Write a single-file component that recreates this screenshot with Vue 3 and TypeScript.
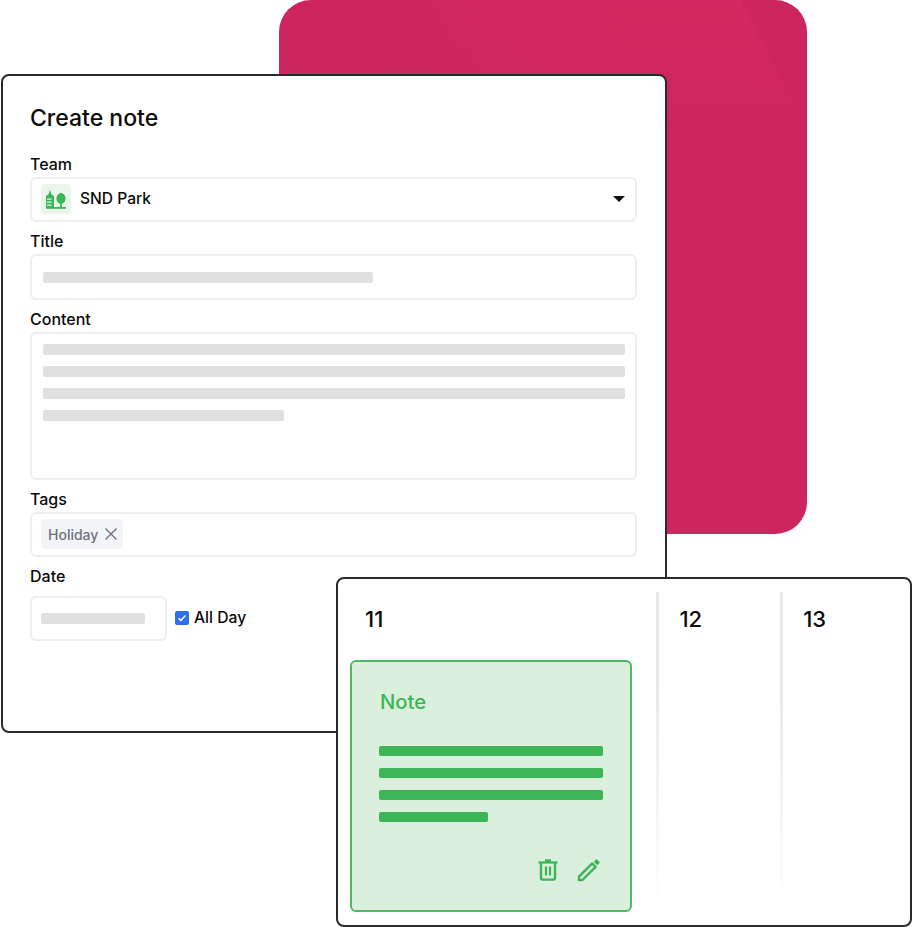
<script setup lang="ts">
const contentLines = [582, 582, 582, 241];
const noteLines = [224, 224, 224, 109];
const days = [
  { num: 11, width: 319 },
  { num: 12, width: 124 },
  { num: 13, width: 130 },
];
</script>

<template>
  <div class="canvas">
    <div class="backdrop">
      <div class="sheen"></div>
    </div>

    <section class="form-card">
      <h1 class="heading">Create note</h1>

      <div class="field">
        <label>Team</label>
        <div class="box team">
          <span class="team-logo">
            <svg width="24" height="24" viewBox="0 0 24 24">
              <path d="M2 20h20v1.8H2z" fill="#3cb556" />
              <path d="M2 9l2.4-1.6L6 3l1.6 4.4L10 9v11.5H2z" fill="#3cb556" />
              <path d="M3 11.5h4.5v1.3H3zM3 14.5h4.5v1.3H3zM3 17.5h4.5v1.3H3z" fill="#eaf6ec" />
              <ellipse cx="17" cy="11.5" rx="4.6" ry="5.4" fill="#3cb556" />
              <path d="M16.1 15h1.8v6h-1.8z" fill="#3cb556" />
            </svg>
          </span>
          <span class="team-name">SND Park</span>
          <span class="caret"></span>
        </div>
      </div>

      <div class="field">
        <label>Title</label>
        <div class="box title-box">
          <div class="skeleton title-line"></div>
        </div>
      </div>

      <div class="field">
        <label>Content</label>
        <div class="box content-box">
          <div
            v-for="(w, i) in contentLines"
            :key="i"
            class="skeleton"
            :style="{ width: w + 'px' }"
          ></div>
        </div>
      </div>

      <div class="field">
        <label>Tags</label>
        <div class="box tags-box">
          <span class="tag">
            Holiday
            <svg width="14" height="14" viewBox="0 0 14 14">
              <path d="M1.5 1.5l11 11M12.5 1.5l-11 11" stroke="#6b7280" stroke-width="1.4" fill="none" />
            </svg>
          </span>
        </div>
      </div>

      <div class="field date-field">
        <label>Date</label>
        <div class="date-row">
          <div class="box date-box">
            <div class="skeleton"></div>
          </div>
          <span class="check">
            <svg width="10" height="10" viewBox="0 0 10 10">
              <path d="M1.5 5.2l2.4 2.3 4.6-5" stroke="#fff" stroke-width="1.5" fill="none" />
            </svg>
          </span>
          <span class="all-day">All Day</span>
        </div>
      </div>
    </section>

    <section class="calendar-card">
      <div
        v-for="d in days"
        :key="d.num"
        class="day"
        :style="{ width: d.width + 'px' }"
      >
        <div class="day-num">{{ d.num }}</div>
        <div v-if="d.num === 11" class="note">
          <div class="note-title">Note</div>
          <div class="note-lines">
            <div
              v-for="(w, i) in noteLines"
              :key="i"
              class="note-line"
              :style="{ width: w + 'px' }"
            ></div>
          </div>
          <div class="note-actions">
            <svg width="24" height="24" viewBox="0 0 24 24" fill="none" stroke="#3cb556">
              <path d="M2.5 4.5h19" stroke-width="2.2" />
              <path d="M9 2.6h6" stroke-width="2.6" />
              <path d="M5 5v15a1.6 1.6 0 0 0 1.6 1.6h10.8A1.6 1.6 0 0 0 19 20V5" stroke-width="2.4" />
              <path d="M10 8.5v9M14 8.5v9" stroke-width="2.2" />
            </svg>
            <svg width="24" height="24" viewBox="0 0 24 24" fill="none" stroke="#3cb556">
              <path d="M2 22v-3.4L15.2 5.4l3.4 3.4L5.4 22z" stroke-width="2.4" stroke-linejoin="round" />
              <path d="M18.2 2.4l3.4 3.4" stroke-width="3.8" />
            </svg>
          </div>
        </div>
      </div>
    </section>
  </div>
</template>

<style>
html,
body {
  margin: 0;
  background: #fff;
}
</style>

<style scoped>
.canvas {
  position: relative;
  width: 912px;
  height: 927px;
  overflow: hidden;
  font-family: Inter, "Liberation Sans", sans-serif;
  color: #0b0b0b;
}

.backdrop {
  position: absolute;
  left: 279px;
  top: 0;
  width: 528px;
  height: 534px;
  border-radius: 32px;
  background: #cd265e;
  overflow: hidden;
}

.sheen {
  position: absolute;
  right: 0;
  top: 0;
  width: 420px;
  height: 130px;
  background: linear-gradient(180deg, rgba(213, 41, 97, 0.75), rgba(213, 41, 97, 0));
  clip-path: polygon(0 0, 84% 0, 100% 100%, 0 100%);
  -webkit-mask-image: linear-gradient(90deg, transparent, #000 55%);
  mask-image: linear-gradient(90deg, transparent, #000 55%);
}

.form-card {
  position: absolute;
  left: 1px;
  top: 74px;
  width: 666px;
  height: 659px;
  box-sizing: border-box;
  padding: 26px 28px 0 27px;
  background: #fff;
  border: 2px solid #2a2a2a;
  border-radius: 8px;
  display: flex;
  flex-direction: column;
}

.heading {
  margin: 0 0 19px;
  font-size: 23px;
  line-height: 32px;
  font-weight: 500;
}

.field {
  display: flex;
  flex-direction: column;
  margin-bottom: 8px;
}

.field label {
  margin-top: -1px;
  margin-bottom: 1px;
  font-size: 16px;
  line-height: 24px;
  font-weight: 500;
}

.box {
  box-sizing: border-box;
  background: #fff;
  border: 2px solid #eeeeee;
  border-radius: 6px;
}

.skeleton {
  height: 11px;
  border-radius: 2px;
  background: #e0e0e0;
}

.team {
  height: 45px;
  display: flex;
  align-items: center;
  padding: 0 10px 1px 9px;
}

.team-logo {
  width: 30px;
  height: 30px;
  border-radius: 4px;
  background: #eaf6ec;
  display: flex;
  align-items: center;
  justify-content: center;
}

.team-name {
  margin-left: 9px;
  margin-top: -1px;
  font-size: 15.6px;
  font-weight: 500;
}

.caret {
  margin-left: auto;
  width: 0;
  height: 0;
  border-left: 6px solid transparent;
  border-right: 6px solid transparent;
  border-top: 6px solid #111;
}

.title-box {
  height: 46px;
  display: flex;
  align-items: center;
  padding: 0 11px;
}

.title-line {
  width: 330px;
}

.content-box {
  height: 148px;
  padding: 10px 11px;
  display: flex;
  flex-direction: column;
  gap: 11px;
}

.tags-box {
  height: 45px;
  display: flex;
  align-items: center;
  padding: 0 9px 1px;
}

.tag {
  height: 30px;
  box-sizing: border-box;
  padding: 0 5px 0 7px;
  display: flex;
  align-items: center;
  gap: 6px;
  border-radius: 4px;
  background: #f3f4f8;
  color: #6b7280;
  font-size: 14px;
  font-weight: 500;
}

.date-field label {
  margin-bottom: 8px;
}

.date-row {
  display: flex;
  align-items: center;
}

.date-box {
  width: 137px;
  height: 45px;
  display: flex;
  align-items: center;
  padding: 0 9px;
}

.date-box .skeleton {
  width: 104px;
}

.check {
  margin-left: 8px;
  margin-top: -2px;
  width: 14px;
  height: 14px;
  border-radius: 2px;
  background: #2f6fed;
  display: flex;
  align-items: center;
  justify-content: center;
}

.all-day {
  margin-left: 5px;
  margin-top: -3px;
  font-size: 15.7px;
  font-weight: 500;
}

.calendar-card {
  position: absolute;
  left: 336px;
  top: 577px;
  width: 576px;
  height: 350px;
  box-sizing: border-box;
  background: #fff;
  border: 2px solid #2a2a2a;
  border-radius: 8px;
  padding: 13px 0 18px 0;
  display: flex;
}

.day {
  position: relative;
  box-sizing: border-box;
  padding-left: 23px;
}

.day + .day::before {
  content: "";
  position: absolute;
  left: 0;
  top: 0;
  bottom: 0;
  width: 3px;
  background: linear-gradient(180deg, #e8e8e8 0%, #e8e8e8 30%, #ffffff 100%);
}

.day:first-child {
  padding-left: 12px;
}

.day-num {
  padding-top: 14px;
  font-size: 22px;
  line-height: 26px;
  font-weight: 500;
}

.day:first-child .day-num {
  padding-left: 15px;
}

.note {
  margin-top: 28px;
  width: 282px;
  height: 252px;
  box-sizing: border-box;
  background: #daf0dd;
  border: 2px solid #4dbb63;
  border-radius: 6px;
  padding: 26px 28px 28px 27px;
  display: flex;
  flex-direction: column;
}

.note-title {
  padding-left: 1px;
  font-size: 20.3px;
  line-height: 28px;
  font-weight: 500;
  color: #3cb556;
}

.note-lines {
  margin-top: 30px;
  display: flex;
  flex-direction: column;
  gap: 12px;
}

.note-line {
  height: 10px;
  border-radius: 2px;
  background: #3cb556;
}

.note-actions {
  margin-top: auto;
  padding-right: 1px;
  display: flex;
  justify-content: flex-end;
  gap: 17px;
}
</style>
